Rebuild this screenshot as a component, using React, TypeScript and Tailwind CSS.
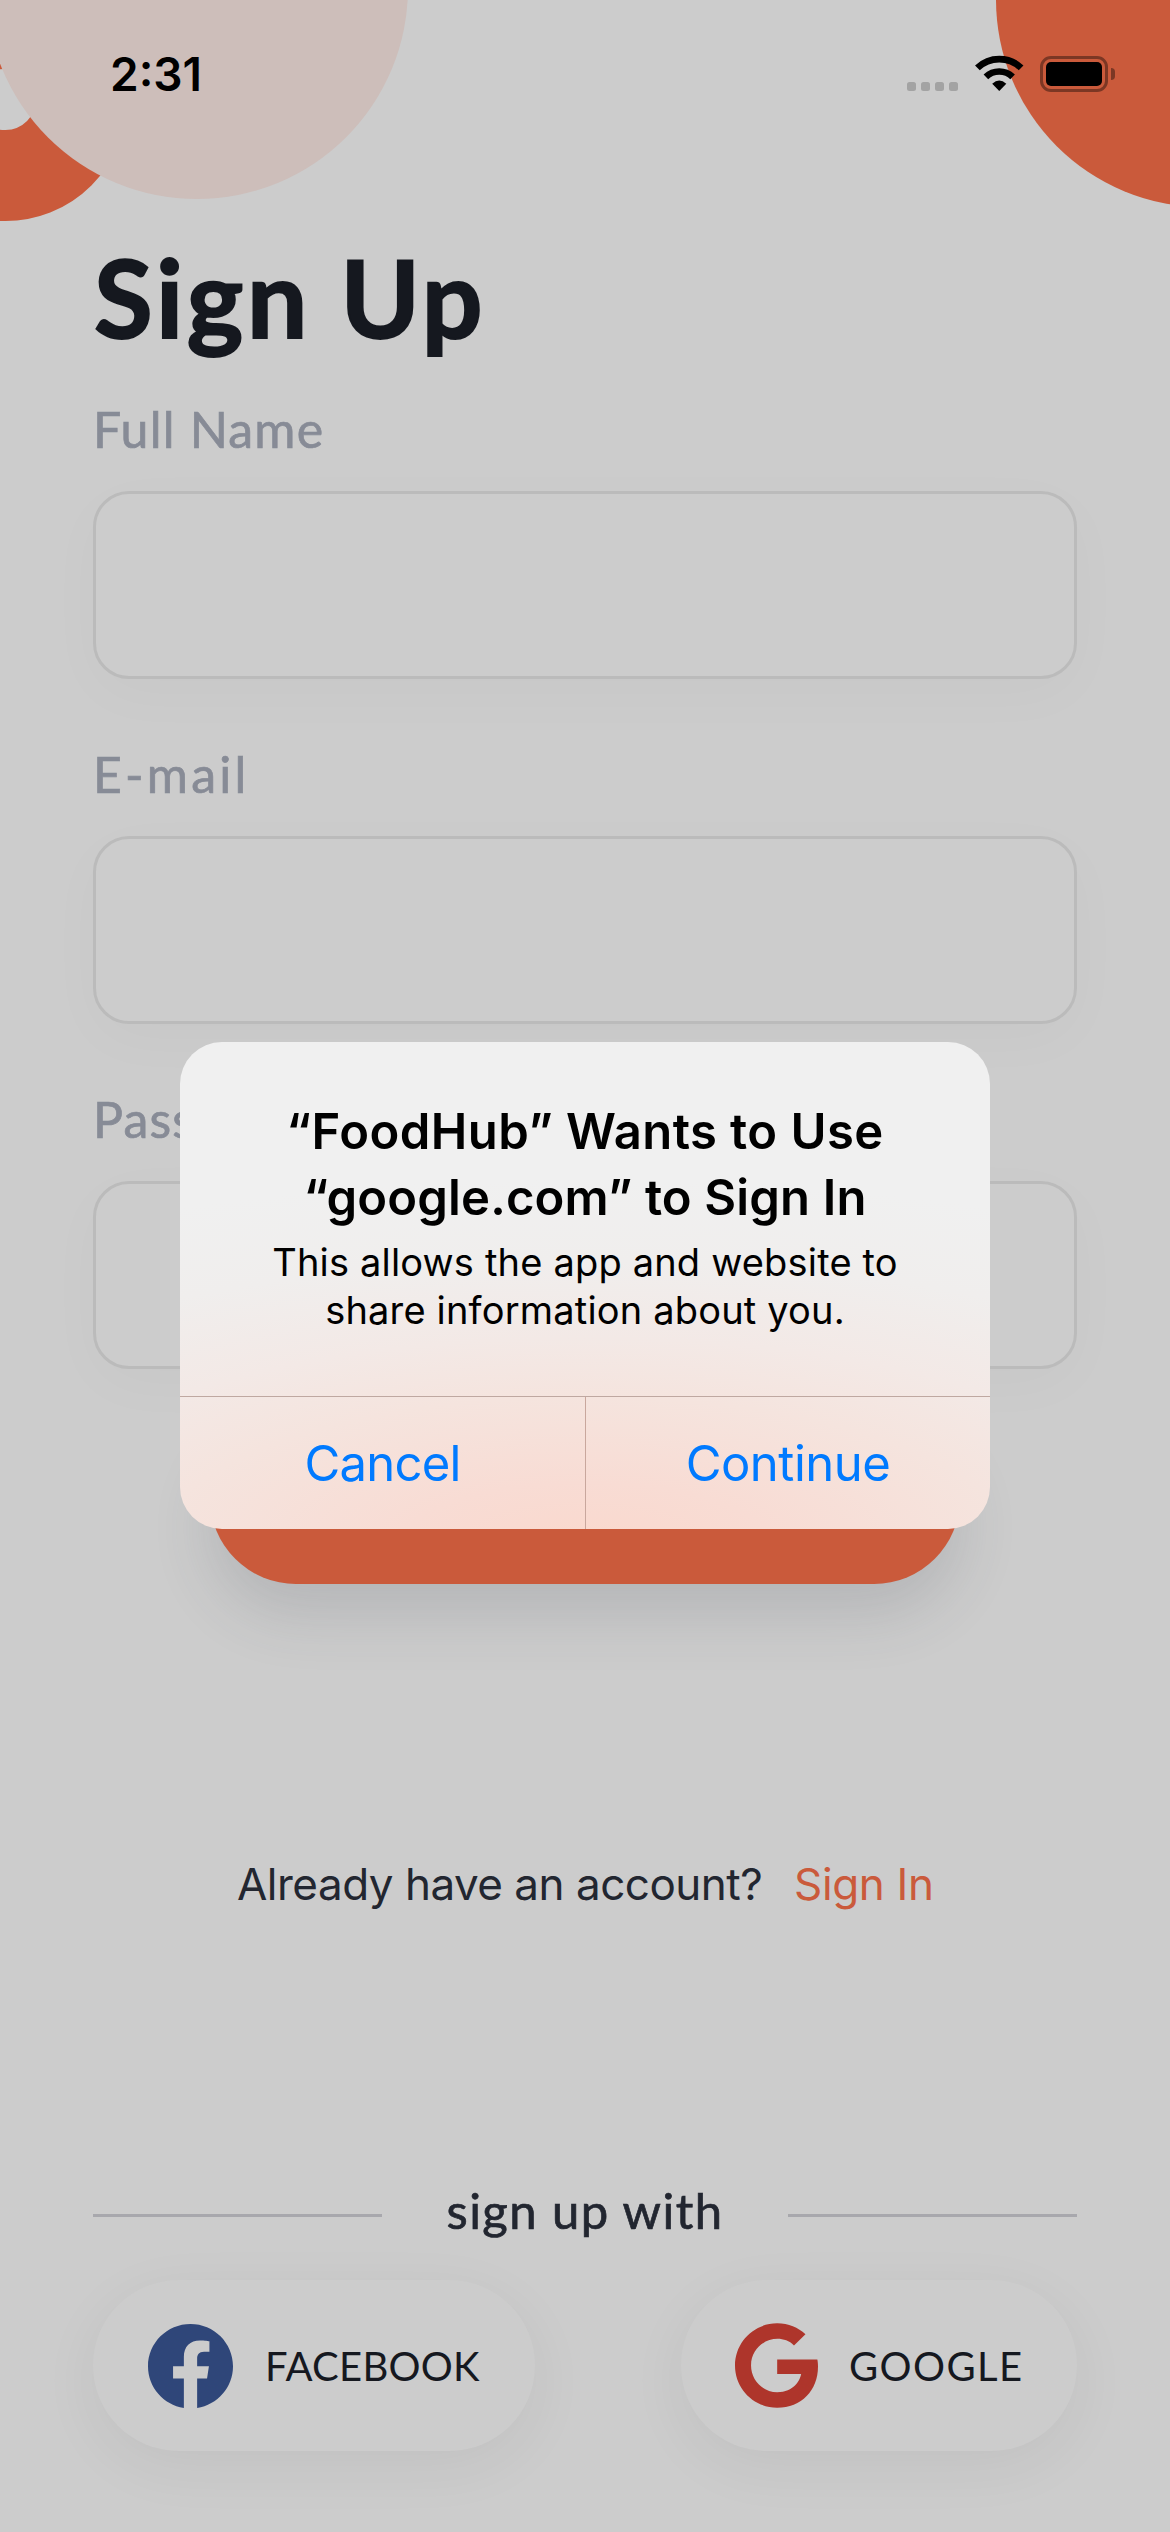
import React from "react";

function Field({ label, className }: { label: string; className: string }) {
  return (
    <div className="flex flex-col">
      <span className={"h-[60px] text-[50px] leading-[60px] text-[#878b96] whitespace-nowrap [-webkit-text-stroke:0.7px_#878b96] " + className}>{label}</span>
      <div className="mt-8 h-[188px] rounded-[36px] border-[3px] border-[#bbbbbb] bg-[#cccccc] shadow-[0_15px_60px_rgba(0,0,0,0.025)]" />
    </div>
  );
}

function WifiIcon() {
  return (
    <svg width="49" height="36" viewBox="0 0 49 36" fill="none">
      <path d="M2.4 12.9A31.5 31.5 0 0 1 46.1 12.9" stroke="#000" strokeWidth="6.8" />
      <path d="M10.9 21.9A19.2 19.2 0 0 1 37.6 21.9" stroke="#000" strokeWidth="6.6" />
      <path d="M24.25 36L17.2 28.8Q24.25 22.2 31.3 28.8Z" fill="#000" />
    </svg>
  );
}

function StatusBar() {
  return (
    <div className="relative flex h-[147px] items-start justify-between pr-[55px] pl-[110px]">
      <span className="mt-11 text-[46px] leading-[60px] font-semibold text-black">2:31</span>
      <div className="mt-[55px] flex items-start">
        <div className="mt-[27px] flex gap-[5px]">
          <i className="size-[9px] rounded-[2.5px] bg-[#a3a3a3]" />
          <i className="size-[9px] rounded-[2.5px] bg-[#a3a3a3]" />
          <i className="size-[9px] rounded-[2.5px] bg-[#a3a3a3]" />
          <i className="size-[9px] rounded-[2.5px] bg-[#a3a3a3]" />
        </div>
        <div className="ml-[17px]">
          <WifiIcon />
        </div>
        <div className="mt-px ml-4 h-9 w-[68px] rounded-[11px] border-[3px] border-[#7c3724] p-[3px]">
          <div className="h-full rounded-[5px] bg-black" />
        </div>
        <div className="mt-[13px] ml-[3px] h-[12px] w-1 rounded-r-full bg-[#7c3724]" />
      </div>
    </div>
  );
}

function Alert() {
  return (
    <div className="absolute top-[1042px] left-[180px] flex h-[487px] w-[810px] flex-col overflow-hidden rounded-[42px] bg-[radial-gradient(ellipse_1050px_370px_at_50%_507px,#fad8cd_0%,#f8dcd4_18%,#f5e4de_41%,#f3e9e6_57%,#f0eeed_78%,#f0f0f0_100%)] text-center text-black">
      <div className="flex h-[354px] shrink-0 flex-col pt-[57px] whitespace-nowrap">
        <h2 className="text-[49px] leading-[66px] font-semibold">
          <span className="block tracking-[0.44px]">“FoodHub” Wants to Use</span>
          <span className="block tracking-[0.14px]">“google.com” to Sign In</span>
        </h2>
        <p className="mt-[7px] text-[38px] leading-[48px] tracking-[0.18px]">
          This allows the app and website to
          <br />
          share information about you.
        </p>
      </div>
      <div className="grid h-[133px] shrink-0 grid-cols-[405px_1fr] border-t border-[#bfa8a1] text-[49px] leading-[130px] text-[#007aff]">
        <button className="pt-[2px] tracking-[-0.76px]">Cancel</button>
        <button className="border-l border-[#c9a79d] pt-[2px] tracking-[-0.48px]">Continue</button>
      </div>
    </div>
  );
}

export default function App() {
  return (
    <div className="relative h-[2532px] w-[1170px] overflow-hidden bg-[#cccccc] font-['Inter',sans-serif]">
      <div className="absolute top-[-21.9px] left-[-116.6px] size-[243.2px] rounded-full border-[91.2px] border-[#ca5a3b]" />
      <div className="absolute top-[-223.6px] left-[-14.4px] size-[422.6px] rounded-full bg-[#cdbeba]" />
      <div className="absolute top-[-208px] left-[996px] size-[415px] rounded-full bg-[#ca5a3b]" />

      <StatusBar />

      <main className="relative flex flex-col px-[93px] font-['Lato',sans-serif]">
        <h1 className="mt-[90px] ml-px h-[120px] text-[107px] leading-[120px] font-bold tracking-[3.6px] text-[#15181f] [-webkit-text-stroke:2px_#15181f]">Sign Up</h1>

        <div className="mt-[42px] flex flex-col gap-[65px]">
          <Field label="Full Name" className="tracking-[1.2px]" />
          <Field label="E-mail" className="tracking-[3.2px]" />
          <Field label="Password" className="tracking-[1.2px]" />
        </div>

        <div className="mt-[43px] h-[172px] w-[750px] self-center rounded-full bg-[#ca5a3b] shadow-[0_30px_60px_rgba(60,66,82,0.16)]" />

        <div className="mt-[270px] flex h-[60px] pl-[144px] font-['Inter',sans-serif] text-[44px] leading-[60px] whitespace-nowrap">
          <span className="w-[557px] tracking-[-0.5px] text-[#222630]">Already have an account?</span>
          <span className="tracking-[-0.34px] text-[#ca5a3b]">Sign In</span>
        </div>

        <div className="mt-[266px] flex h-[60px] items-start justify-between">
          <div className="mt-[34px] h-[3px] w-[289px] bg-[#a8a8ad]" />
          <span className="text-[49px] leading-[60px] tracking-[1.43px] whitespace-nowrap text-[#222630] [-webkit-text-stroke:0.7px_#222630]">sign up with</span>
          <div className="mt-[34px] h-[3px] w-[289px] bg-[#a8a8ad]" />
        </div>

        <div className="mt-10 flex justify-between text-[40px] leading-[60px] text-[#15181f]">
          <button className="flex h-[171px] w-[442px] items-center rounded-full bg-[#cccccc] pl-[55px] shadow-[0_15px_60px_rgba(0,0,0,0.055)]">
            <svg width="85" height="84" viewBox="8 8 496 493" preserveAspectRatio="none" fill="#2f4679">
              <path d="M504 256C504 119 393 8 256 8S8 119 8 256c0 123.78 90.69 226.38 209.25 245V327.69h-63V256h63v-54.64c0-62.15 37-96.48 93.67-96.48 27.14 0 55.52 4.84 55.52 4.84v61h-31.28c-30.8 0-40.41 19.12-40.41 38.73V256h68.78l-11 71.69h-57.78V501C413.31 482.38 504 379.78 504 256z" />
            </svg>
            <span className="mt-px ml-8 tracking-[0.23px]">FACEBOOK</span>
          </button>
          <button className="flex h-[171px] w-[396px] items-center rounded-full bg-[#cccccc] pl-[54px] shadow-[0_15px_60px_rgba(0,0,0,0.055)]">
            <svg width="83" height="85" viewBox="0 8 488 496" fill="#ae352b">
              <path d="M488 261.8C488 403.3 391.1 504 248 504 110.8 504 0 393.2 0 256S110.8 8 248 8c66.8 0 123 24.5 166.3 64.9l-67.5 64.9C258.5 52.6 94.3 116.6 94.3 256c0 86.5 69.1 156.6 153.7 156.6 98.2 0 135-70.4 140.8-106.9H248v-85.3h236.1c2.3 12.7 3.9 24.9 3.9 41.4z" />
            </svg>
            <span className="mt-px ml-[31px] tracking-[1.4px]">GOOGLE</span>
          </button>
        </div>
      </main>

      <Alert />
    </div>
  );
}
